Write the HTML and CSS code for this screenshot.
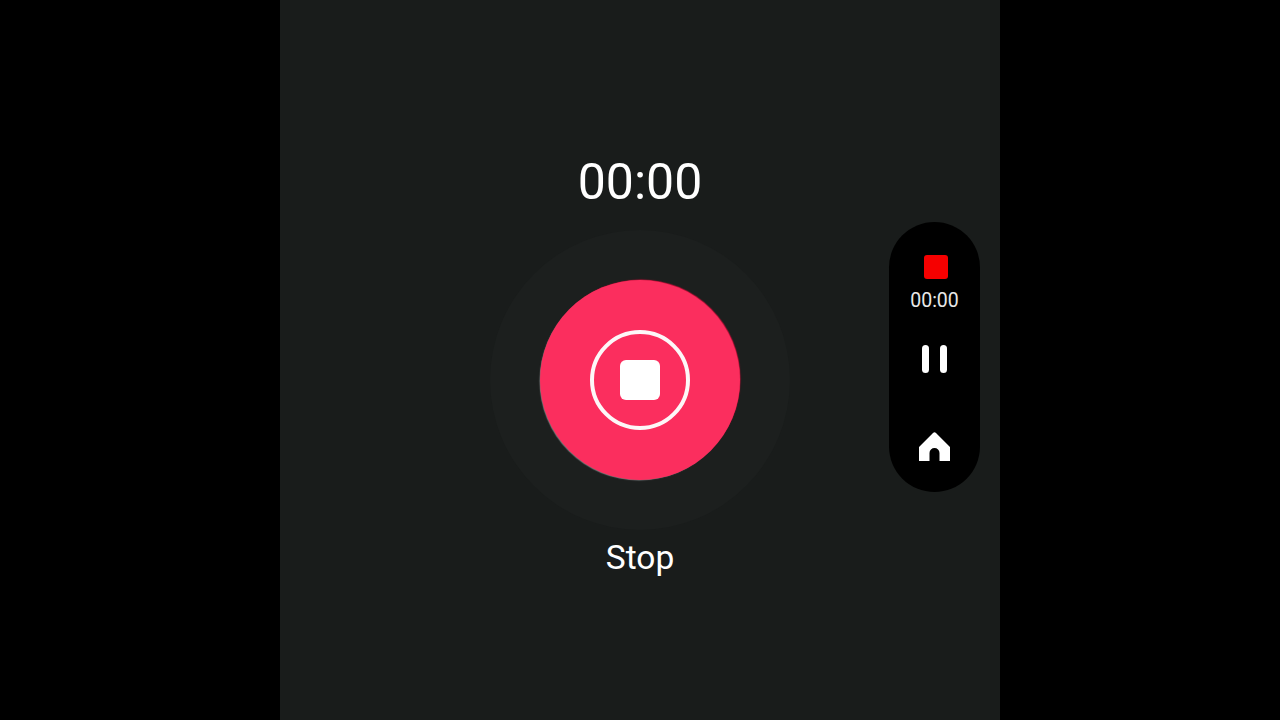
FILE: index.html
```html
<!DOCTYPE html>
<html lang="en">
<head>
<meta charset="utf-8">
<title>Recorder</title>
<link rel="stylesheet" href="styles.css">
</head>
<body>
<main class="phone">
  <div class="timer">00:00</div>
  <div class="halo">
    <div class="record-button">
      <div class="ring"><div class="stop-square"></div></div>
    </div>
  </div>
  <div class="label">Stop</div>
  <aside class="pill">
    <div class="pill-rec"></div>
    <div class="pill-time">00:00</div>
    <div class="pill-pause"><span class="bar"></span><span class="bar"></span></div>
    <svg class="pill-home" viewBox="0 0 31 29" aria-hidden="true"><path fill="#fff" d="M14 1 Q15.5 -0.4 17 1 L31 15 V29 H20.5 V21 A5 5 0 0 0 10.5 21 V29 H0 V15 Z"/></svg>
  </aside>
</main>
</body>
</html>
```
FILE: styles.css
```css
* { box-sizing: border-box; }
html, body { height: 100%; }
body {
  margin: 0;
  background: #000;
  display: flex;
  justify-content: center;
  font-family: Roboto, "Liberation Sans", sans-serif;
  color: #fff;
  overflow: hidden;
}
.phone {
  position: relative;
  width: 720px;
  height: 720px;
  background: #191c1b;
  display: flex;
  flex-direction: column;
  align-items: center;
  padding-top: 152px;
}
.timer {
  font-size: 50px;
  line-height: 60px;
  height: 78px;
}
.halo {
  width: 300px;
  height: 300px;
  border-radius: 50%;
  background: #1c1f1e;
  display: flex;
  align-items: center;
  justify-content: center;
}
.record-button {
  width: 200px;
  height: 200px;
  border-radius: 50%;
  background: #fb2e5e;
  box-shadow: 1px -1px 1px -0.5px #c8103a, -1px 1px 1px -0.5px #77797a;
  display: flex;
  align-items: center;
  justify-content: center;
}
.ring {
  width: 100px;
  height: 100px;
  border-radius: 50%;
  border: 4px solid #fdf7f8;
  display: flex;
  align-items: center;
  justify-content: center;
}
.stop-square {
  width: 40px;
  height: 40px;
  border-radius: 6px;
  background: #fff;
}
.label {
  font-size: 33.5px;
  line-height: 40px;
  margin-top: 8px;
}
.pill {
  position: absolute;
  left: 609px;
  top: 222px;
  width: 91px;
  height: 270px;
  border-radius: 46px;
  background: #000;
  display: flex;
  flex-direction: column;
  align-items: center;
  padding-top: 33px;
}
.pill-rec {
  width: 24px;
  height: 24px;
  border-radius: 3px;
  background: #f60000;
  margin-left: 2px;
}
.pill-time {
  font-size: 19.5px;
  line-height: 22px;
  margin-top: 11px;
  color: #e8e8e8;
}
.pill-pause {
  display: flex;
  gap: 11px;
  margin-top: 33px;
}
.bar {
  width: 7px;
  height: 28px;
  border-radius: 3.5px;
  background: #fff;
}
.pill-home {
  width: 31px;
  height: 29px;
  margin-top: 59px;
}
```
